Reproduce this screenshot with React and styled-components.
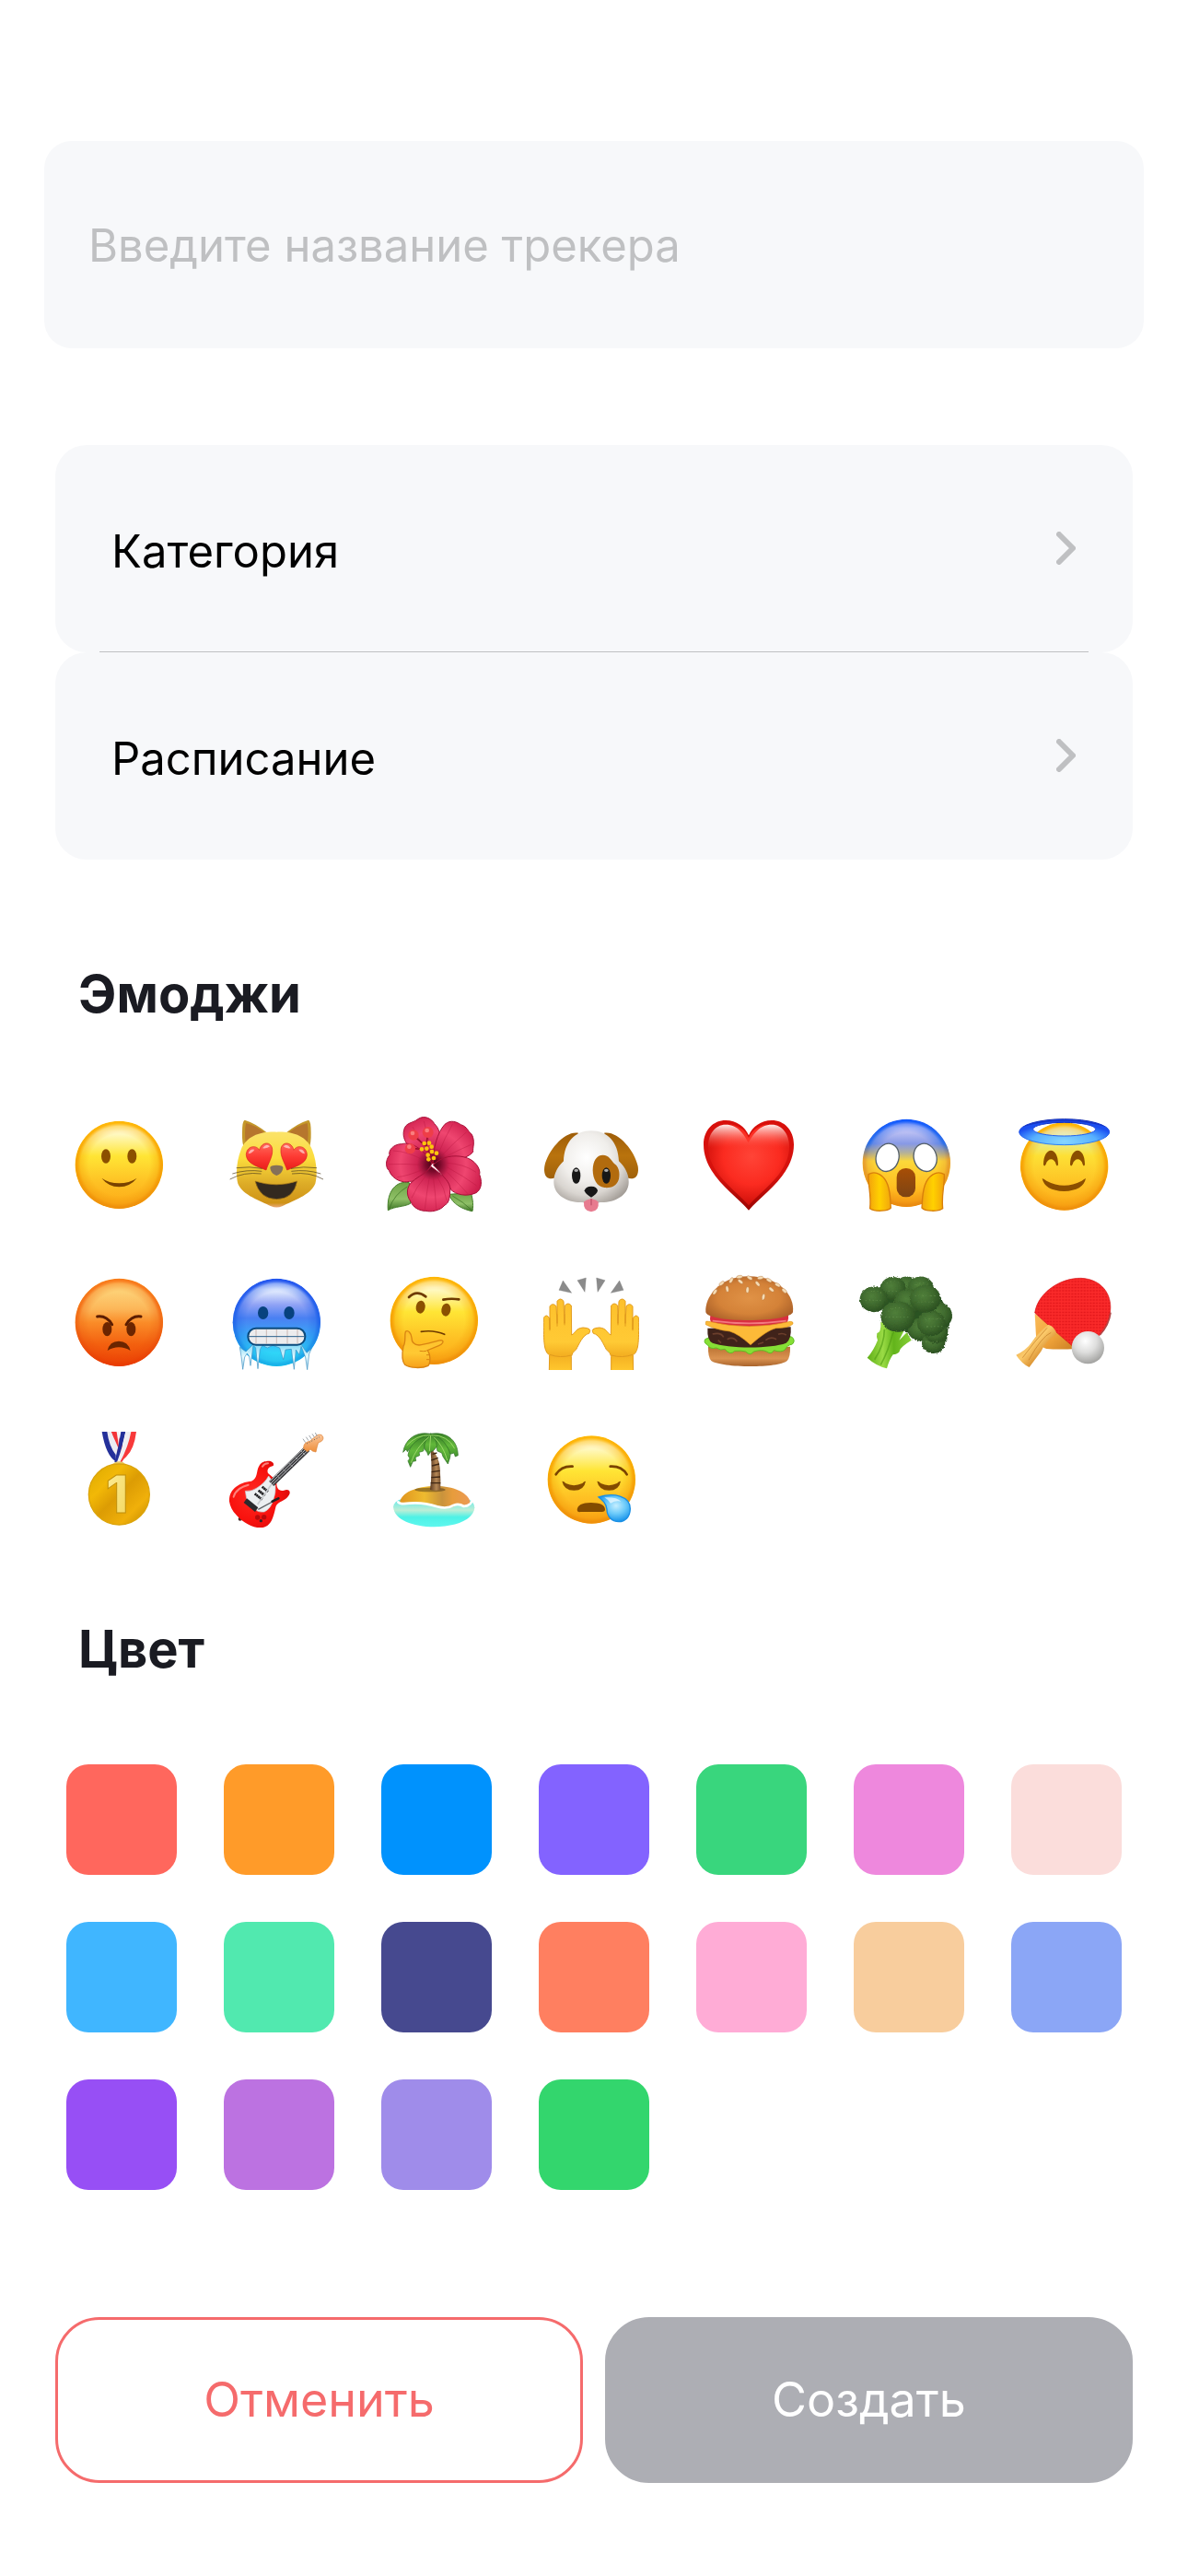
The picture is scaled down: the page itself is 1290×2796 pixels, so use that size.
import React from "react";
import styled, { createGlobalStyle } from "styled-components";

const GlobalStyle = createGlobalStyle`
  *, *::before, *::after { box-sizing: border-box; }
  body {
    margin: 0;
    background: #ffffff;
    font-family: Inter, "Noto Sans", sans-serif;
  }
`;

const Screen = styled.main`
  display: flex;
  flex-direction: column;
  padding: 153px 60px 101px;
`;

const NameInput = styled.input`
  margin: 0 -12px 105px;
  padding: 81px 48px 79px;
  border: 0;
  border-radius: 30px;
  background: #f7f8fa;
  color: #1a1b22;
  font: 400 49px/65px Inter, "Noto Sans", sans-serif;
  outline: none;

  &::placeholder {
    color: #bfc0c2;
    opacity: 1;
  }
`;

const Options = styled.nav`
  display: flex;
  flex-direction: column;
`;

const OptionRow = styled.button`
  display: flex;
  align-items: center;
  justify-content: space-between;
  padding: 79px 62px 81px 61px;
  border: 0;
  border-radius: 34px;
  background: #f7f8fa;
  color: #000000;
  font: 400 49px/65px Inter, "Noto Sans", sans-serif;
  text-align: left;
`;

const OptionLabel = styled.span`
  padding-top: 8px;
  line-height: 57px;
`;

const Divider = styled.hr`
  height: 1px;
  margin: -1px 48px 0;
  border: 0;
  background: #bfc0c2;
`;

const Section = styled.section`
  display: flex;
  flex-direction: column;
  padding-top: ${(p) => p.$top}px;
`;

const Heading = styled.h2`
  margin: 0;
  padding: 0 25px;
  color: #1a1b22;
  font-size: 56px;
  font-weight: 700;
  line-height: 68px;
`;

const EmojiGrid = styled.div`
  display: grid;
  grid-template-columns: repeat(7, 104px);
  justify-content: space-between;
  row-gap: 67px;
  padding: 99px 23px 0 17px;
`;

const EmojiButton = styled.button`
  height: 104px;
  padding: 0;
  border: 0;
  background: none;

  svg {
    display: block;
    width: 104px;
    height: 104px;
  }
`;

const ColorGrid = styled.div`
  display: grid;
  grid-template-columns: repeat(7, 120px);
  justify-content: space-between;
  row-gap: 51px;
  padding: 91px 12px 0;
`;

const Swatch = styled.button`
  height: 120px;
  padding: 0;
  border: 0;
  border-radius: 24px;
  background: ${(p) => p.$color};
`;

const Actions = styled.div`
  display: grid;
  grid-template-columns: 1fr 1fr;
  gap: 24px;
  padding-top: 138px;
`;

const ActionButton = styled.button`
  padding: 54px 24px;
  border: 3px solid ${(p) => (p.$filled ? "#adaeb4" : "#f56b6c")};
  border-radius: 48px;
  background: ${(p) => (p.$filled ? "#adaeb4" : "#ffffff")};
  color: ${(p) => (p.$filled ? "#ffffff" : "#f56b6c")};
  font: 400 52px/66px Inter, "Noto Sans", sans-serif;
`;

function Stops({ list }) {
  return list.map(([offset, color, opacity = 1]) => (
    <stop key={offset} offset={offset} stopColor={color} stopOpacity={opacity} />
  ));
}

const YELLOW = [[0, "#fff6b0"], [0.12, "#fffbd2"], [0.4, "#ffe535"], [0.7, "#fec124"], [1, "#fda816"]];

function Face({ id, cx, cy, stops = YELLOW, rim = [[0, "#ffb400"], [1, "#ee8f0c"]] }) {
  return (
    <>
      <defs>
        <linearGradient id={`${id}-fill`} x1="0" y1="0" x2="0" y2="1"><Stops list={stops} /></linearGradient>
        <linearGradient id={`${id}-rim`} x1="0" y1="0" x2="0" y2="1"><Stops list={rim} /></linearGradient>
        <radialGradient id={`${id}-fade`}>
          <Stops list={[[0.7, "#000"], [0.88, "#666"], [0.95, "#eee"], [1, "#fff"]]} />
        </radialGradient>
        <mask id={`${id}-mask`}><circle cx={cx} cy={cy} r="143" fill={`url(#${id}-fade)`} /></mask>
      </defs>
      <circle cx={cx} cy={cy} r="143" fill={`url(#${id}-fill)`} />
      <circle cx={cx} cy={cy} r="143" fill={`url(#${id}-rim)`} mask={`url(#${id}-mask)`} />
    </>
  );
}

function Smile() {
  return (
    <svg viewBox="82 97 312 312" aria-hidden="true">
      <Face id="smile" cx={239} cy={254} />
      <g fill="#8b5000">
        <ellipse cx="196" cy="226" rx="15" ry="23" />
        <ellipse cx="281" cy="226" rx="15" ry="23" />
        <path d="M182 297 Q204 325 239 326 Q275 325 297 297 Q272 314 239 314 Q206 314 182 297Z" fill="#7a4300" />
      </g>
    </svg>
  );
}

function CatHalf() {
  return (
    <>
      <path d="M648 108 Q640 110 640 150 Q639 185 648 206 L722 150 Q682 118 648 108Z" fill="#c4972a" />
      <path d="M652 118 Q646 150 652 190 L712 148 Q680 124 652 118Z" fill="#b6762d" />
    </>
  );
}

function CatEye() {
  return (
    <>
      <path d="M718 271 C694 260 655 252 653 222 C653 194 684 186 696 206 C702 178 736 176 738 204 C740 228 724 250 718 271Z" fill="url(#cat-heart)" stroke="#d8231d" strokeWidth="2" />
      <path d="M660 218 Q664 200 680 204 Q676 214 660 218Z M706 200 Q718 182 730 194 Q722 202 706 200Z" fill="#fff" opacity="0.55" />
      <path d="M705 266 Q665 258 621 264 M704 275 Q655 268 608 283 M702 283 Q645 276 600 301" fill="none" stroke="#4a3a1c" strokeWidth="2" />
    </>
  );
}

function HeartCat() {
  return (
    <svg viewBox="595 97 312 312" aria-hidden="true">
      <defs>
        <linearGradient id="cat-head" x1="0" y1="0" x2="0" y2="1">
          <Stops list={[[0, "#fbe36a"], [0.35, "#fbdc3c"], [0.7, "#dcaa26"], [0.94, "#cf9317"], [1, "#e8a878"]]} />
        </linearGradient>
        <linearGradient id="cat-heart" x1="0" y1="0" x2="0" y2="1">
          <Stops list={[[0, "#ff6a5c"], [0.5, "#fd3a33"], [1, "#ea1d1a"]]} />
        </linearGradient>
      </defs>
      <CatHalf />
      <g transform="translate(1504 0) scale(-1 1)"><CatHalf /></g>
      <path d="M752 147 C806 145 850 160 868 205 C882 240 886 285 878 315 C862 354 804 370 770 389 Q752 396 734 389 C700 370 642 354 626 315 C618 285 622 240 636 205 C654 160 698 145 752 147Z" fill="url(#cat-head)" />
      <CatEye />
      <g transform="translate(1504 0) scale(-1 1)"><CatEye /></g>
      <path d="M731 264 Q730 255 752 255 Q774 255 773 264 Q770 284 752 289 Q734 284 731 264Z" fill="#857058" />
      <path d="M682 307 Q752 330 819 307 Q808 365 752 366 Q697 365 682 307Z" fill="#33291f" stroke="#a97818" strokeWidth="2" />
    </svg>
  );
}

const PETALS = [
  "M1262 250 C1210 225 1155 185 1167 140 C1172 115 1198 118 1212 105 C1235 90 1258 105 1266 120 C1298 150 1285 210 1262 250Z",
  "M1262 250 C1262 200 1275 150 1300 122 C1320 105 1340 115 1352 123 C1375 130 1374 145 1388 155 C1400 180 1390 196 1392 212 C1370 240 1310 240 1262 250Z",
  "M1262 255 C1290 225 1330 222 1360 228 C1400 235 1418 270 1413 285 C1426 320 1413 338 1402 345 C1370 360 1335 350 1320 335 C1310 310 1290 280 1262 255Z",
  "M1258 250 C1230 200 1190 178 1160 186 C1132 186 1115 208 1120 222 C1105 240 1108 265 1118 272 C1130 304 1165 314 1185 308 C1215 310 1240 285 1258 250Z",
  "M1255 260 C1290 285 1322 310 1317 340 C1316 370 1310 380 1300 385 C1285 405 1250 408 1240 404 C1215 405 1195 390 1190 375 C1170 350 1178 320 1195 308 C1215 290 1235 285 1255 260Z",
];
const VEINS =
  "M1250 225 Q1215 170 1195 130 M1258 220 Q1245 160 1232 112 M1278 220 Q1300 165 1325 122 M1288 226 Q1330 180 1370 148 M1298 230 Q1345 205 1386 188 M1305 248 Q1360 250 1402 278 M1308 262 Q1360 290 1404 322 M1308 278 Q1345 315 1375 348 M1250 292 Q1240 350 1235 398 M1262 292 Q1270 350 1272 398 M1236 292 Q1205 330 1192 362 M1276 294 Q1300 330 1306 370 M1232 240 Q1180 210 1132 208 M1228 254 Q1170 250 1116 252 M1226 270 Q1180 290 1145 294";
const POLLEN = [[1233, 184], [1249, 183], [1225, 203], [1241, 201], [1257, 195], [1258, 211], [1245, 222], [1273, 216], [1264, 232], [1247, 236]];

function Hibiscus() {
  return (
    <svg viewBox="1108 97 312 312" aria-hidden="true">
      <defs>
        <radialGradient id="petal" gradientUnits="userSpaceOnUse" cx="1262" cy="252" r="165">
          <Stops list={[[0, "#3d0312"], [0.15, "#7e0a2c"], [0.32, "#cf2453"], [0.65, "#ef4670"], [1, "#cf1f4d"]]} />
        </radialGradient>
        <linearGradient id="leaf" x1="0" y1="0" x2="0" y2="1"><Stops list={[[0, "#6da345"], [0.6, "#8fc067"], [1, "#3d7426"]]} /></linearGradient>
      </defs>
      <path d="M1184 312 C1142 304 1110 340 1115 402 C1140 388 1165 392 1188 380Z" fill="url(#leaf)" stroke="#457f2b" strokeWidth="3" />
      <path d="M1313 350 C1325 382 1360 400 1390 405 C1395 380 1388 355 1385 345Z" fill="url(#leaf)" stroke="#457f2b" strokeWidth="3" />
      <path d="M1178 325 Q1135 350 1120 395 M1325 355 Q1360 375 1386 400" fill="none" stroke="#376d20" strokeWidth="2" />
      {PETALS.map((d) => <path key={d} d={d} fill="url(#petal)" stroke="#a81038" strokeWidth="3" />)}
      <path d={VEINS} fill="none" stroke="#b8163f" strokeWidth="3" opacity="0.4" />
      <path d="M1262 250 L1240 190 L1245 150 M1240 195 L1200 160 M1245 205 L1190 200" fill="none" stroke="#9c0f2b" strokeWidth="5" />
      <g fill="#ee3e48">
        <circle cx="1198" cy="157" r="17" /><circle cx="1245" cy="148" r="18" /><circle cx="1187" cy="201" r="17" />
      </g>
      <g fill="#ff9a96" opacity="0.7">
        <circle cx="1195" cy="151" r="7" /><circle cx="1242" cy="142" r="7" /><circle cx="1184" cy="195" r="7" />
      </g>
      {POLLEN.map(([x, y]) => <circle key={`${x}-${y}`} cx={x} cy={y} r="7" fill="#fbc60d" />)}
    </svg>
  );
}

function Dog() {
  return (
    <svg viewBox="121 97 312 312" aria-hidden="true">
      <defs>
        <radialGradient id="dog-head" gradientUnits="userSpaceOnUse" cx="262" cy="230" r="170">
          <Stops list={[[0, "#ffffff"], [0.45, "#f0eeeb"], [0.72, "#d9d5d0"], [1, "#a09a94"]]} />
        </radialGradient>
        <linearGradient id="dog-ear" x1="0" y1="0" x2="0" y2="1"><Stops list={[[0, "#9e5d08"], [0.5, "#b9730d"], [1, "#a0610a"]]} /></linearGradient>
      </defs>
      <path d="M235 150 C192 142 136 205 125 258 C119 298 142 304 160 296 L205 230Z M319 150 C362 142 418 205 429 258 C435 298 412 304 394 296 L349 230Z" fill="url(#dog-ear)" />
      <path d="M277 143 C330 143 365 180 367 242 C388 262 400 285 399 312 C398 355 350 378 306 376 Q277 385 248 376 C204 378 156 355 155 312 C154 285 166 262 187 242 C189 180 224 143 277 143Z" fill="url(#dog-head)" />
      <path d="M315 222 C335 222 343 240 352 250 C370 262 370 285 367 300 C360 325 338 330 320 328 C295 325 282 300 282 270 C283 240 295 222 315 222Z" fill="#b26b0e" />
      <g fill="#171717">
        <ellipse cx="228" cy="289" rx="14" ry="26" /><ellipse cx="326" cy="289" rx="14" ry="26" />
        <path d="M255 338 Q258 324 277 324 Q296 324 298 338 Q296 350 277 360 Q258 350 255 338Z" />
      </g>
      <g fill="#fff" opacity="0.65"><ellipse cx="228" cy="272" rx="7" ry="5" /><ellipse cx="326" cy="272" rx="7" ry="5" /></g>
      <path d="M253 374 Q265 366 277 364 Q289 366 300 374 Q304 405 277 407 Q250 405 253 374Z" fill="#e77b8f" />
      <path d="M277 364 V386" stroke="#c0546c" strokeWidth="4" />
    </svg>
  );
}

const HEART = "M790 402 C745 348 643 288 643 188 C643 140 675 109 715 109 C750 109 778 130 790 158 C802 130 830 109 865 109 C905 109 937 140 937 188 C937 288 835 348 790 402Z";

function Heart() {
  return (
    <svg viewBox="634 97 312 312" aria-hidden="true">
      <defs>
        <linearGradient id="heart-rim" x1="0" y1="0" x2="0" y2="1"><Stops list={[[0, "#d80f0b"], [0.6, "#d5120d"], [1, "#9c0502"]]} /></linearGradient>
        <radialGradient id="heart-fill" gradientUnits="userSpaceOnUse" cx="800" cy="225" r="170">
          <Stops list={[[0, "#ff4437"], [0.6, "#fb2b20"], [1, "#d3120c"]]} />
        </radialGradient>
        <linearGradient id="heart-shine" gradientUnits="userSpaceOnUse" x1="0" y1="122" x2="0" y2="200"><Stops list={[[0, "#ffffff", 0.95], [0.4, "#ffb8b0", 0.6], [1, "#ff4437", 0]]} /></linearGradient>
      </defs>
      <path d={HEART} fill="url(#heart-rim)" />
      <path d={HEART} fill="url(#heart-fill)" transform="translate(79 24) scale(0.9)" />
      <path d="M658 205 C655 155 680 123 715 123 C755 123 775 155 789 182 C804 155 825 123 865 123 C900 123 925 155 922 205Z" fill="url(#heart-shine)" />
    </svg>
  );
}

function ScreamHalf() {
  return (
    <>
      <ellipse cx="222" cy="230" rx="37" ry="46" transform="rotate(16 222 230)" fill="#fff" stroke="#55606a" strokeWidth="4" />
      <path d="M160 285 C185 270 213 290 223 320 C233 350 231 375 233 394 C222 406 180 407 165 396 C170 350 158 320 160 285Z" fill="url(#scream-hand)" stroke="#d87f0b" strokeWidth="4" />
    </>
  );
}

function Scream() {
  return (
    <svg viewBox="127 97 312 312" aria-hidden="true">
      <defs>
        <linearGradient id="scream-hand" x1="0" y1="0" x2="1" y2="0"><Stops list={[[0, "#f3a20c"], [0.5, "#ffd100"], [1, "#f2a50e"]]} /></linearGradient>
        <linearGradient id="scream-mouth" x1="0" y1="0" x2="0" y2="1"><Stops list={[[0, "#a84e06"], [1, "#7c4413"]]} /></linearGradient>
      </defs>
      <Face
        id="scream"
        cx={284}
        cy={248}
        stops={[[0, "#a8b0f8"], [0.1, "#cdcdf8"], [0.28, "#8799e6"], [0.38, "#b2b09c"], [0.48, "#fcd83a"], [0.75, "#ffc022"], [1, "#fb9d14"]]}
        rim={[[0, "#0a55ff"], [0.28, "#2a6fe8"], [0.46, "#e7a030"], [1, "#e98a10"]]}
      />
      <ScreamHalf />
      <g transform="translate(567 0) scale(-1 1)"><ScreamHalf /></g>
      <rect x="252" y="265" width="61" height="94" rx="29" fill="url(#scream-mouth)" />
    </svg>
  );
}

function HaloFace() {
  return (
    <svg viewBox="640 97 312 312" aria-hidden="true">
      <defs>
        <radialGradient id="halo" gradientUnits="userSpaceOnUse" cx="798" cy="178" r="175" gradientTransform="translate(0 119) scale(1 0.33)">
          <Stops list={[[0, "#86d6ff"], [0.6, "#57b0ff"], [0.85, "#2f74f8"], [1, "#1c4ff0"]]} />
        </radialGradient>
        <linearGradient id="halo-rim" x1="0" y1="0" x2="0" y2="1"><Stops list={[[0, "#0c22a8"], [0.4, "#1c4be8"], [1, "#2c80f5"]]} /></linearGradient>
      </defs>
      <Face id="angel" cx={798} cy={259} stops={[[0, "#fff3b0"], [0.1, "#e8f2d8"], [0.2, "#e6ee9a"], [0.38, "#fde035"], [0.7, "#fec124"], [1, "#fda816"]]} />
      <path fillRule="evenodd" d="M651 147 A147 42 0 0 1 945 147 A147 42 0 0 1 651 147Z M696 138 A102 22 0 0 0 900 138 A102 22 0 0 0 696 138Z" fill="url(#halo)" stroke="url(#halo-rim)" strokeWidth="3" />
      <path d="M664 130 Q700 108 798 108 Q896 108 932 130 Q880 113 798 113 Q716 113 664 130Z" fill="#1735c4" />
      <g fill="#8b4e00">
        <path d="M730 253 C731 192 778 192 778 253 Q775 262 771 252 C766 230 744 230 738 252 Q733 262 730 253Z" />
        <path d="M817 253 C818 192 865 192 865 253 Q862 262 858 252 C853 230 831 230 825 252 Q820 262 817 253Z" />
        <path d="M726 298 Q732 300 740 306 Q797 336 855 306 Q863 300 868 298 Q860 338 797 340 Q734 338 726 298Z" />
      </g>
    </svg>
  );
}

function Angry() {
  return (
    <svg viewBox="82 610 312 312" aria-hidden="true">
      <Face
        id="angry"
        cx={239}
        cy={767}
        stops={[[0, "#fdc765"], [0.12, "#fdd47a"], [0.35, "#fcb658"], [0.5, "#fa8c28"], [0.75, "#f3600f"], [1, "#ec4206"]]}
        rim={[[0, "#f9791a"], [0.5, "#f06a16"], [1, "#e83a02"]]}
      />
      <g fill="#6b2500">
        <ellipse cx="200" cy="789" rx="15" ry="23" /><ellipse cx="278" cy="789" rx="15" ry="23" />
        <path d="M201 859 Q208 828 238 828 Q268 828 276 859 Q258 848 238 848 Q219 848 201 859Z" />
      </g>
      <path d="M168 748 Q198 744 216 774 M310 748 Q280 744 262 774" fill="none" stroke="#5c1d00" strokeWidth="9" strokeLinecap="round" />
    </svg>
  );
}

function Cold() {
  return (
    <svg viewBox="595 610 312 312" aria-hidden="true">
      <defs>
        <linearGradient id="ice" x1="0" y1="0" x2="0" y2="1"><Stops list={[[0, "#7fd8f7"], [0.5, "#e8fbff"], [1, "#9fd2ea"]]} /></linearGradient>
      </defs>
      <Face
        id="cold"
        cx={752}
        cy={767}
        stops={[[0, "#c8dcff"], [0.12, "#ecf4ff"], [0.3, "#8fa2f5"], [0.45, "#4a80f2"], [0.65, "#3aa8f8"], [0.85, "#2fd6f8"], [1, "#38dff5"]]}
        rim={[[0, "#1d50ee"], [0.5, "#2468ea"], [1, "#18b4e8"]]}
      />
      <g fill="#07427f"><ellipse cx="708" cy="736" rx="17" ry="21" /><ellipse cx="793" cy="736" rx="17" ry="21" /></g>
      <path d="M632 848 L637 878 L642 920 L648 880 L656 868 L663 878 L667 908 L672 872 L676 842 L684 850 L691 918 L698 855 L706 842 L722 850 L740 842 L762 850 L774 888 L781 856 L800 854 L809 920 L815 856 L826 872 L832 845 L846 880 L852 921 L858 870 L866 852 L850 866 L832 838 L676 838 L652 862Z" fill="url(#ice)" stroke="#3b8fc2" strokeWidth="2" strokeLinejoin="round" />
      <rect x="659" y="786" width="186" height="54" rx="26" fill="#ececee" stroke="#0b4a7d" strokeWidth="6" />
      <path d="M685 790 V837 M719 790 V837 M752 790 V837 M787 790 V837 M820 790 V837" stroke="#b89f98" strokeWidth="2" />
      <path d="M660 813 H844" stroke="#2a5f8a" strokeWidth="3" />
    </svg>
  );
}

function Thinking() {
  return (
    <svg viewBox="1108 610 312 312" aria-hidden="true">
      <defs>
        <linearGradient id="think-hand" x1="0" y1="0" x2="0" y2="1"><Stops list={[[0, "#fdbd27"], [0.6, "#ffc933"], [1, "#f7a01a"]]} /></linearGradient>
      </defs>
      <Face id="think" cx={1265} cy={761} />
      <g fill="#8b5000">
        <ellipse cx="1221" cy="717" rx="15" ry="21" transform="rotate(8 1221 717)" />
        <ellipse cx="1304" cy="726" rx="15" ry="21" transform="rotate(8 1304 726)" />
      </g>
      <path d="M1183 685 Q1208 660 1238 683 M1295 693 Q1320 688 1346 692" fill="none" stroke="#6e3a00" strokeWidth="8" strokeLinecap="round" />
      <path d="M1223 797 Q1265 791 1299 806" fill="none" stroke="#6e3a00" strokeWidth="5" strokeLinecap="round" />
      <path d="M1172 797 C1180 790 1191 802 1192 817 C1192 832 1198 840 1216 841 C1240 839 1268 828 1288 825 C1300 827 1292 838 1282 842 L1243 858 C1254 870 1254 898 1246 908 C1225 918 1185 916 1170 905 C1158 890 1162 860 1165 845 C1174 830 1168 810 1172 797Z" fill="url(#think-hand)" stroke="#d98412" strokeWidth="4" />
      <path d="M1240 860 Q1230 862 1218 860 M1249 873 H1240 M1250 888 H1240" fill="none" stroke="#d98412" strokeWidth="3" />
    </svg>
  );
}

function HandHalf() {
  return (
    <>
      <path d="M122 752 Q131 738 140 752 L142 790 L142 714 Q152 702 163 714 L166 770 L166 698 Q176 684 187 698 L190 770 L191 712 Q202 700 212 712 L213 808 C228 800 225 787 250 784 Q282 785 270 803 C250 806 236 840 228 855 Q214 866 212 878 L212 924 L140 924 L141 874 C123 860 122 840 122 752Z" fill="url(#hand-fill)" stroke="#e39c1d" strokeWidth="3" />
      <path d="M142 752 V794 M166 740 V780 M190 740 V776 M142 872 Q176 884 212 874" fill="none" stroke="#e09a1c" strokeWidth="3" />
      <path d="M185 631 L172 662 L213 671Z M232 630 L260 622 L256 668Z" fill="#8b8b8b" stroke="#6f6f6f" strokeWidth="1" />
    </>
  );
}

function RaisedHands() {
  return (
    <svg viewBox="121 610 312 312" aria-hidden="true">
      <defs>
        <linearGradient id="hand-fill" x1="0" y1="0" x2="0" y2="1"><Stops list={[[0, "#fdc02b"], [0.6, "#ffca35"], [0.78, "#f4b022"], [1, "#ffc72e"]]} /></linearGradient>
      </defs>
      <HandHalf />
      <g transform="translate(554 0) scale(-1 1)"><HandHalf /></g>
    </svg>
  );
}

const SEEDS = [[680, 668, 35], [720, 658, -8], [763, 634, -50], [786, 661, 5], [838, 684, 10], [819, 641, -40], [733, 630, 30], [864, 660, -50], [884, 645, -60], [906, 664, -45], [760, 619, 80], [828, 622, 80], [856, 630, -60], [702, 640, 50], [793, 622, -60]];

function Burger() {
  return (
    <svg viewBox="634 610 312 312" aria-hidden="true">
      <defs>
        <radialGradient id="bun" cx="0.5" cy="0.5" r="0.6"><Stops list={[[0, "#e09246"], [0.6, "#d48238"], [1, "#a95f28"]]} /></radialGradient>
        <linearGradient id="bun-base" x1="0" y1="0" x2="0" y2="1"><Stops list={[[0, "#bb7333"], [0.6, "#da9250"], [1, "#a9642c"]]} /></linearGradient>
      </defs>
      <path d="M658 846 Q657 880 668 892 C700 915 885 917 915 892 Q926 880 925 846Z" fill="url(#bun-base)" />
      <path d="M648 822 Q642 834 656 840 Q664 856 684 850 Q700 860 712 854 Q730 876 744 860 Q768 858 780 862 Q796 878 806 862 Q834 854 848 862 Q864 874 872 858 Q896 866 908 856 Q916 840 932 838 Q944 826 930 814 L900 810 L670 812Z" fill="#86df35" stroke="#5ebd22" strokeWidth="3" />
      <path d="M656 786 Q654 825 672 834 C720 852 860 854 912 834 Q930 822 927 782Z" fill="#40231a" />
      <path d="M672 805 Q700 798 708 815 M720 822 Q740 812 752 830 M845 825 Q862 812 880 822 M886 806 Q900 800 912 808 M690 825 L700 834 M820 838 L838 832" fill="none" stroke="#6c3f2c" strokeWidth="5" />
      <path d="M665 745 Q660 770 680 774 Q790 788 904 774 Q922 768 919 745Z" fill="#d92f3f" />
      <path d="M672 762 Q790 778 912 762" fill="none" stroke="#f37a80" strokeWidth="5" />
      <path d="M650 766 Q649 762 660 764 Q790 796 926 764 Q936 764 934 772 Q920 786 878 786 Q850 792 796 840 Q756 804 728 796 Q680 790 650 774Z" fill="#fcba38" stroke="#e0951c" strokeWidth="2" />
      <path d="M650 733 C646 690 690 617 790 617 C890 617 940 680 934 733 C932 748 870 760 790 760 C710 760 652 750 650 733Z" fill="url(#bun)" />
      {SEEDS.map(([x, y, r]) => (
        <ellipse key={`${x}-${y}`} cx={x} cy={y} rx="5" ry="10" transform={`rotate(${r} ${x} ${y})`} fill="#f6dcb4" stroke="#a2602a" strokeWidth="1" />
      ))}
    </svg>
  );
}

const FLORETS = [[285, 652, 38], [330, 655, 42], [240, 657, 42], [178, 692, 46], [385, 745, 48], [330, 790, 42], [372, 834, 38], [380, 800, 38], [365, 770, 46], [290, 700, 46], [345, 690, 50], [256, 748, 56]];

function Broccoli() {
  return (
    <svg viewBox="127 610 312 312" aria-hidden="true">
      <defs>
        <radialGradient id="floret" cx="0.42" cy="0.38" r="0.62"><Stops list={[[0, "#507f3a"], [0.55, "#3f6a2e"], [1, "#2b5021"]]} /></radialGradient>
        <linearGradient id="stalk" x1="0" y1="0" x2="1" y2="0"><Stops list={[[0, "#5fae16"], [0.35, "#9adb45"], [0.6, "#63b41b"], [1, "#86cf38"]]} /></linearGradient>
        <filter id="leafy" x="-10%" y="-10%" width="120%" height="120%">
          <feTurbulence type="fractalNoise" baseFrequency="0.2" numOctaves="2" seed="4" />
          <feDisplacementMap in="SourceGraphic" scale="9" xChannelSelector="R" yChannelSelector="G" />
        </filter>
      </defs>
      <path d="M200 765 Q202 800 188 802 Q185 815 190 825 Q176 860 156 882 Q184 908 220 917 Q228 888 240 872 Q262 868 262 858 Q266 846 300 825 L285 800 L260 825 L275 795Z" fill="url(#stalk)" />
      <path d="M212 790 Q212 840 180 888 M240 800 Q225 860 200 905" fill="none" stroke="#4d9a12" strokeWidth="5" opacity="0.6" />
      <g filter="url(#leafy)">
        <path d="M200 640 L330 625 L380 660 L425 740 L415 830 L330 825 L270 790 L210 740Z" fill="#2c5222" />
        {FLORETS.map(([x, y, r]) => <ellipse key={`${x}-${y}`} cx={x} cy={y} rx={r} ry={r * 0.9} fill="url(#floret)" />)}
        <g fill="none" stroke="#78a45c" strokeWidth="3" strokeDasharray="3 9" opacity="0.6">
          <path d="M155 672 Q180 655 205 675 M150 695 H205 M220 640 Q245 625 265 645 M225 665 H262 M315 645 Q340 630 360 650 M312 680 H380 M320 700 H375 M225 730 Q255 708 290 730 M215 750 H295 M345 755 H412 M350 780 H405 M345 830 H395" />
        </g>
      </g>
    </svg>
  );
}

function PingPong() {
  return (
    <svg viewBox="640 610 312 312" aria-hidden="true">
      <defs>
        <pattern id="rubber" width="10" height="10" patternUnits="userSpaceOnUse">
          <rect width="10" height="10" fill="#fa2a2a" />
          <rect x="1" y="2" width="6" height="4" fill="#e01418" />
        </pattern>
        <linearGradient id="wood" x1="0" y1="0" x2="1" y2="1"><Stops list={[[0, "#f9bb5a"], [0.5, "#f3a73c"], [1, "#c97d23"]]} /></linearGradient>
        <linearGradient id="grip" x1="0" y1="0" x2="1" y2="1"><Stops list={[[0, "#d58b2c"], [0.45, "#fbc96a"], [0.7, "#d68a2a"], [1, "#a8641a"]]} /></linearGradient>
        <radialGradient id="ball" cx="0.42" cy="0.3" r="0.7"><Stops list={[[0, "#ffffff"], [0.5, "#dededd"], [1, "#a3a3a1"]]} /></radialGradient>
      </defs>
      <path d="M702 738 L706 812 Q722 850 740 853 Q780 856 835 853 L830 835Z" fill="url(#wood)" />
      <path d="M702 736 C712 670 785 622 852 623 C920 626 953 675 948 728 C945 780 910 815 880 842 L822 842 Q760 790 702 736Z" fill="url(#rubber)" stroke="#d5161a" strokeWidth="2" />
      <path d="M949 735 Q944 775 914 808" fill="none" stroke="#b24646" strokeWidth="5" />
      <path d="M746 774 Q768 780 773 806 Q738 826 722 862 L684 913 Q658 900 641 873 Q676 855 690 834 Q712 800 746 774Z" fill="url(#grip)" />
      <path d="M742 785 Q700 830 662 882 M755 800 Q725 812 682 890" fill="none" stroke="#bd7420" strokeWidth="3" opacity="0.6" />
      <circle cx="875" cy="849" r="53" fill="url(#ball)" />
    </svg>
  );
}

function Medal() {
  return (
    <svg viewBox="82 73 312 312" aria-hidden="true">
      <defs>
        <linearGradient id="gold" x1="0" y1="0" x2="1" y2="1"><Stops list={[[0, "#d9a800"], [0.3, "#f2b807"], [0.5, "#dc9c04"], [0.75, "#f0b00a"], [1, "#bf8600"]]} /></linearGradient>
        <linearGradient id="digit" x1="0" y1="0" x2="1" y2="1"><Stops list={[[0, "#fdee9a"], [1, "#f3d65c"]]} /></linearGradient>
      </defs>
      <path d="M213 73 H231 L262 148 L245 172Z" fill="#f33438" />
      <path d="M231 73 H240 L238 120Z" fill="#f4f4f6" />
      <path d="M195 73 H213 L236 125 L226 165Z" fill="#ececf2" />
      <path d="M183 73 H200 Q206 120 228 148 V170 Q196 150 183 73Z" fill="#24309a" />
      <path d="M245 73 H260 L236 172 H224 Q238 120 245 73Z" fill="#24309a" />
      <path d="M260 73 H278 Q272 130 242 172 H232 Q252 120 260 73Z" fill="#efeff2" />
      <path d="M278 73 H295 Q288 130 262 155 Q250 164 247 174 H241 Q270 120 278 73Z" fill="#f8393a" />
      <path d="M218 182 Q222 170 239 170 Q256 170 260 182Z" fill="#e6c765" />
      <circle cx="239" cy="277" r="99" fill="url(#gold)" stroke="#dca40a" strokeWidth="4" />
      <text x="232" y="337" textAnchor="middle" fontFamily="Inter, sans-serif" fontWeight="800" fontSize="168" fill="url(#digit)" stroke="#c08f0a" strokeWidth="3">1</text>
    </svg>
  );
}

function Guitar() {
  return (
    <svg viewBox="595 73 312 312" aria-hidden="true">
      <defs>
        <radialGradient id="guitar-body" cx="0.4" cy="0.5" r="0.65"><Stops list={[[0, "#ff2a22"], [0.6, "#f8120e"], [1, "#d80a0a"]]} /></radialGradient>
        <linearGradient id="headstock" x1="0" y1="0" x2="0" y2="1"><Stops list={[[0, "#fbc69a"], [1, "#ee8f3c"]]} /></linearGradient>
      </defs>
      <circle cx="633" cy="357" r="6" fill="#4b2a2a" />
      <path d="M720 169 C736 166 746 176 741 184 C724 188 720 198 724 208 L752 232 C750 258 760 268 776 264 C792 258 800 268 792 280 C782 298 757 300 750 315 C742 345 738 385 698 386 C660 385 605 345 598 300 C595 255 640 236 670 234 C692 226 685 200 695 185 C702 172 710 170 720 169Z" fill="url(#guitar-body)" />
      <path d="M706 186 Q712 176 724 176 M612 285 Q620 256 660 246" fill="none" stroke="#ff9c95" strokeWidth="6" strokeLinecap="round" opacity="0.8" />
      <path d="M650 266 Q672 268 688 256 Q714 240 726 217 L748 248 Q750 272 742 292 Q734 324 712 334 Q690 336 684 326 L654 290Z" fill="#eceff1" stroke="#c7cccf" strokeWidth="2" />
      <path d="M735 242 L852 128" stroke="#3a3a3d" strokeWidth="22" />
      <path d="M728 236 L846 122 M733 241 L850 127 M738 246 L855 132" stroke="#bfc1c4" strokeWidth="3" />
      <path d="M752 214 L764 226 M772 194 L784 206 M792 175 L804 187 M812 155 L824 167 M832 136 L844 148" stroke="#9a9ca0" strokeWidth="3" />
      <path d="M840 128 Q838 108 860 104 L884 84 Q902 78 904 94 Q902 106 888 108 Q884 120 880 139 Q868 138 862 130 L852 138Z" fill="url(#headstock)" stroke="#dd8236" strokeWidth="2" />
      <path d="M838 96 L846 108 M848 90 L856 102 M858 85 L866 97 M868 80 L876 92 M878 76 L884 88" stroke="#9fa5aa" strokeWidth="3" />
      <path d="M850 112 L892 90" stroke="#5e6266" strokeWidth="3" strokeDasharray="3 6" />
      <path d="M705 252 L724 268 M693 264 L714 281 M681 275 L705 294" stroke="#19191b" strokeWidth="8" strokeDasharray="6 1" />
      <path d="M655 290 L692 320 L682 334 L645 304Z" fill="#2b2b2e" />
      <path d="M692 326 L755 292" stroke="#5d6165" strokeWidth="4" />
      <path d="M738 300 L758 290" stroke="#222" strokeWidth="8" strokeLinecap="round" />
      <path d="M690 310 L735 245" stroke="#c8ccd0" strokeWidth="5" />
      <g fill="#b80b0b"><circle cx="690" cy="352" r="8" /><circle cx="711" cy="351" r="8" /></g>
      <circle cx="701" cy="363" r="5" fill="#33272a" />
    </svg>
  );
}

function Island() {
  return (
    <svg viewBox="118 73 312 312" aria-hidden="true">
      <defs>
        <linearGradient id="sea" x1="0" y1="0" x2="0" y2="1"><Stops list={[[0, "#62e9ea"], [0.4, "#bdeed6"], [0.65, "#4df1e6"], [1, "#5ff7ee"]]} /></linearGradient>
        <linearGradient id="sand" x1="0" y1="0" x2="1" y2="0"><Stops list={[[0, "#e0941f"], [0.35, "#eebb2f"], [0.6, "#c9933c"], [0.75, "#e79c3c"], [1, "#ec9a55"]]} /></linearGradient>
        <linearGradient id="trunk" x1="0" y1="0" x2="1" y2="0"><Stops list={[[0, "#5b3a22"], [0.6, "#b58755"], [1, "#7a5331"]]} /></linearGradient>
        <linearGradient id="frond" x1="0" y1="0" x2="0" y2="1"><Stops list={[[0, "#3a8228"], [0.5, "#62b83a"], [1, "#43932e"]]} /></linearGradient>
      </defs>
      <path d="M142 318 Q145 298 170 292 H380 Q404 296 407 320 C404 360 345 382 275 383 C205 382 146 360 142 318Z" fill="url(#sea)" />
      <path d="M163 306 C166 272 215 250 282 250 C345 250 392 276 393 306 Q375 318 350 310 Q325 328 300 318 Q230 296 163 306Z" fill="url(#sand)" />
      <path d="M158 302 Q164 310 195 306 Q240 302 285 317 Q318 326 340 312 Q356 306 372 316 Q392 314 398 300" fill="none" stroke="#ffffff" strokeWidth="8" strokeLinecap="round" />
      <ellipse cx="262" cy="262" rx="50" ry="7" fill="#3c2a16" opacity="0.45" />
      <path d="M266 130 Q290 150 294 190 Q297 230 296 262 Q280 266 262 262 Q270 200 264 140Z" fill="url(#trunk)" />
      <path d="M266 166 L288 158 M268 184 L292 178 M267 204 L294 200 M266 222 L295 220 M264 240 L296 240 M270 146 L284 142" stroke="#3f2714" strokeWidth="4" />
      <g fill="url(#frond)" stroke="#2c6e22" strokeWidth="2">
        <path d="M262 80 C225 72 182 90 174 140 L184 130 L188 138 L200 122 L210 126 L224 104Z" />
        <path d="M262 80 C310 72 352 95 353 150 L344 154 L340 142 L328 146 L318 124 L302 118Z" />
        <path d="M260 82 C225 95 196 110 190 150 L196 160 L190 168 L198 188 L206 170 L216 168 L214 156 L228 150 L226 140 L240 136 L246 110Z" />
        <path d="M272 82 C300 92 322 120 328 150 L326 160 L320 178 L312 166 L304 154 L300 142 L286 136Z" />
        <path d="M264 78 C250 92 242 110 244 130 L252 140 L256 150 L264 138 L274 134 L284 120 Q282 92 264 78Z" />
      </g>
      <path d="M262 84 Q215 84 186 118 M266 84 Q320 84 342 128 M258 90 Q215 125 200 174 M274 90 Q306 120 318 166 M264 84 L260 136" fill="none" stroke="#9bd868" strokeWidth="3" />
    </svg>
  );
}

function Sleepy() {
  return (
    <svg viewBox="631 73 312 312" aria-hidden="true">
      <defs>
        <radialGradient id="drop" cx="0.55" cy="0.4" r="0.6"><Stops list={[[0, "#c6eeff"], [0.5, "#6dcbfa"], [1, "#1793ea"]]} /></radialGradient>
      </defs>
      <Face id="sleepy" cx={788} cy={229} />
      <path d="M672 212 Q690 184 726 186 M903 212 Q886 184 849 186" fill="none" stroke="#7a4300" strokeWidth="8" strokeLinecap="round" />
      <g fill="#834b00">
        <path d="M692 234 Q698 234 704 241 Q730 254 758 241 Q764 234 769 234 Q764 264 731 264 Q698 264 692 234Z" />
        <path d="M806 234 Q812 234 818 241 Q844 254 871 241 Q877 234 883 234 Q878 264 845 264 Q812 264 806 234Z" />
        <path d="M741 328 Q742 304 786 304 Q830 304 832 326 Q832 334 822 334 H752 Q741 336 741 328Z" />
      </g>
      <path d="M811 286 C860 270 914 282 914 324 C913 352 896 366 877 366 C852 366 838 346 838 326 C836 306 824 296 811 286Z" fill="url(#drop)" stroke="#1a8fe4" strokeWidth="4" />
      <path d="M830 287 Q868 284 884 300 Q866 296 850 306 Q842 294 830 287Z" fill="#fff" opacity="0.65" />
    </svg>
  );
}

const EMOJIS = [
  ["Улыбка", Smile], ["Влюблённый кот", HeartCat], ["Гибискус", Hibiscus], ["Собака", Dog], ["Сердце", Heart],
  ["Ужас", Scream], ["Ангел", HaloFace], ["Злость", Angry], ["Холод", Cold], ["Раздумье", Thinking],
  ["Поднятые руки", RaisedHands], ["Бургер", Burger], ["Брокколи", Broccoli], ["Пинг-понг", PingPong],
  ["Медаль", Medal], ["Гитара", Guitar], ["Остров", Island], ["Сонливость", Sleepy],
];

const COLORS = [
  "#ff675d", "#ff9b29", "#0092fd", "#8363ff", "#39d67d", "#ee88dd", "#fbdddb",
  "#40b6ff", "#51e9af", "#46498f", "#ff7f60", "#ffacd6", "#f8cd9d", "#8ba6f6",
  "#974ff5", "#bc72e1", "#9f8cea", "#33d66d",
];

function Chevron() {
  return (
    <svg width="21" height="36" viewBox="0 0 21 36" fill="none" aria-hidden="true">
      <path d="M3 3 L18 18 L3 33" stroke="#bfc0c2" strokeWidth="6" strokeLinecap="round" strokeLinejoin="round" />
    </svg>
  );
}

export default function App() {
  return (
    <>
      <GlobalStyle />
      <Screen>
        <NameInput type="text" aria-label="Название трекера" placeholder="Введите название трекера" />
        <Options>
          <OptionRow type="button"><OptionLabel>Категория</OptionLabel><Chevron /></OptionRow>
          <Divider />
          <OptionRow type="button"><OptionLabel>Расписание</OptionLabel><Chevron /></OptionRow>
        </Options>
        <Section $top={112}>
          <Heading>Эмоджи</Heading>
          <EmojiGrid>
            {EMOJIS.map(([label, Icon]) => (
              <EmojiButton key={label} type="button" aria-label={label}><Icon /></EmojiButton>
            ))}
          </EmojiGrid>
        </Section>
        <Section $top={98}>
          <Heading>Цвет</Heading>
          <ColorGrid>
            {COLORS.map((color) => (
              <Swatch key={color} type="button" aria-label={color} $color={color} />
            ))}
          </ColorGrid>
        </Section>
        <Actions>
          <ActionButton type="button">Отменить</ActionButton>
          <ActionButton type="button" $filled>Создать</ActionButton>
        </Actions>
      </Screen>
    </>
  );
}
